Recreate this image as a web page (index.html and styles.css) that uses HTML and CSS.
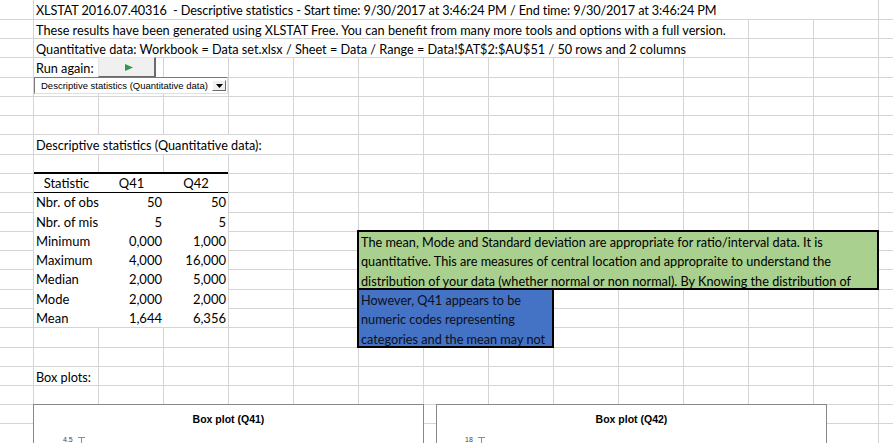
FILE: index.html
```html
<!DOCTYPE html>
<html lang="en">
<head>
  <meta charset="UTF-8">
  <title>XLSTAT - Descriptive statistics</title>
  <link rel="stylesheet" href="styles.css">
</head>
<body>

  <div class="sheet">
    <div class="lines">
      <i></i><i></i><i></i><i></i><i></i><i></i><i></i><i></i>
      <i></i><i></i><i></i><i></i><i></i><i></i><i></i><i></i>
      <i></i><i></i><i></i><i></i><i></i><i></i><i></i>
    </div>

    <div class="cell head-line">XLSTAT 2016.07.40316&nbsp; - Descriptive statistics - Start time: 9/30/2017 at 3:46:24 PM / End time: 9/30/2017 at 3:46:24 PM</div>
    <div class="cell notice-line">These results have been generated using XLSTAT Free. You can benefit from many more tools and options with a full version.</div>
    <div class="cell source-line">Quantitative data: Workbook = Data set.xlsx / Sheet = Data / Range = Data!$AT$2:$AU$51 / 50 rows and 2 columns</div>

    <div class="cell run-label">Run again:</div>
    <button class="run-button" type="button">
      <svg width="8" height="7" viewBox="0 0 8 7"><polygon points="0,0 8,3.5 0,7" fill="#2f9a45"/></svg>
    </button>

    <div class="combo">
      <span>Descriptive statistics (Quantitative data)</span>
      <span class="combo-arrow">
        <svg width="7" height="4" viewBox="0 0 7 4"><polygon points="0,0 7,0 3.5,4" fill="#000"/></svg>
      </span>
    </div>

    <div class="cell section-title">Descriptive statistics (Quantitative data):</div>

    <div class="stats">
      <div class="th">Statistic</div><div class="th">Q41</div><div class="th">Q42</div>
      <div>Nbr. of obs</div><div class="num">50</div><div class="num">50</div>
      <div>Nbr. of mis</div><div class="num">5</div><div class="num">5</div>
      <div>Minimum</div><div class="num">0,000</div><div class="num">1,000</div>
      <div>Maximum</div><div class="num">4,000</div><div class="num">16,000</div>
      <div>Median</div><div class="num">2,000</div><div class="num">5,000</div>
      <div>Mode</div><div class="num">2,000</div><div class="num">2,000</div>
      <div>Mean</div><div class="num">1,644</div><div class="num">6,356</div>
    </div>

    <div class="note note-green">
      <div>The mean, Mode and Standard deviation are appropriate for ratio/interval data. It is</div>
      <div>quantitative. This are measures of central location and appropraite to understand the</div>
      <div>distribution of your data (whether normal or non normal). By Knowing the distribution of</div>
    </div>

    <div class="note note-blue">
      <div>However, Q41 appears to be</div>
      <div>numeric codes representing</div>
      <div>categories and the mean may not</div>
    </div>

    <div class="cell plots-title">Box plots:</div>

    <div class="charts">
      <div class="chart chart-q41">
        <div class="chart-title">Box plot (Q41)</div>
        <div class="axis"><span>4.5</span><svg width="7" height="6" viewBox="0 0 7 6"><path d="M0 0.5H7M3.5 0V6" stroke="#8c8c8c" stroke-width="1"/></svg></div>
      </div>
      <div class="chart chart-q42">
        <div class="chart-title">Box plot (Q42)</div>
        <div class="axis"><span>18</span><svg width="7" height="6" viewBox="0 0 7 6"><path d="M0 0.5H7M3.5 0V6" stroke="#8c8c8c" stroke-width="1"/></svg></div>
      </div>
    </div>
  </div>

</body>
</html>
```

FILE: styles.css
```css
html, body {
  margin: 0;
  overflow: hidden;
  background: #fff;
}
body {
  font-family: Lato, "Liberation Sans", sans-serif;
  font-size: 12.7px;
  color: #000;
}

.sheet {
  --rows: 20px 19px 19px 20px 19px 19px 19px 20px 19px 19px 20px 19px 19px 19px 20px 19px 19px 20px 19px 19px 19px 19px 20px;
  display: grid;
  grid-template-columns: 34px repeat(13, 65px) 1fr;
  grid-template-rows: var(--rows);
  height: 443px;
  overflow: hidden;
}
.lines {
  grid-area: 1 / 1 / -1 / -1;
  display: grid;
  grid-template-rows: var(--rows);
}
.lines i {
  border-bottom: 1px solid #d4d4d4;
  background: repeating-linear-gradient(90deg, transparent 0 33px, #d4d4d4 33px 34px, transparent 34px 65px);
}

/* text cells: white so the overflowing text hides the gridlines */
.cell {
  background: #fff;
  margin: 0 1px 1px 0;
  padding: 2px 2px 0;
  white-space: nowrap;
  overflow: hidden;
  line-height: 17px;
}
.head-line { grid-row: 1; grid-column: 2 / 15; letter-spacing: -0.12px; }
.notice-line { grid-row: 2; grid-column: 2 / 13; }
.source-line { grid-row: 3; grid-column: 2 / 13; }
.run-label { grid-row: 4; grid-column: 2; }
.section-title { grid-row: 8; grid-column: 2 / 6; }
.plots-title { grid-row: 20; grid-column: 2; }

.run-button {
  grid-row: 4;
  grid-column: 3;
  align-self: start;
  justify-self: start;
  width: 58px;
  height: 20px;
  margin: -1px 0 0 -1px;
  padding: 0 0 0 4px;
  background: #f0f0f0;
  border: 1px solid;
  border-color: #e6e6e6 #6b6b6b #6b6b6b #e6e6e6;
  border-right-width: 2px;
  display: flex;
  align-items: center;
  justify-content: center;
}

.combo {
  grid-row: 5;
  grid-column: 2 / 5;
  align-self: start;
  height: 17px;
  margin: -1px 1px 0 0;
  box-sizing: border-box;
  border: 1px solid;
  border-color: #7a7a7a #e0e0e0 #e0e0e0 #7a7a7a;
  background: #fff;
  display: flex;
  align-items: center;
  justify-content: space-between;
  padding: 0 1px 0 6px;
  font-family: "Liberation Sans", Arial, sans-serif;
  font-size: 9.5px;
  white-space: nowrap;
}
.combo-arrow {
  width: 14px;
  height: 11px;
  box-sizing: border-box;
  border: 1px solid;
  border-color: #fff #6b6b6b #6b6b6b #fff;
  background: #f0f0f0;
  display: flex;
  align-items: center;
  justify-content: center;
}

.stats {
  grid-row: 10 / 18;
  grid-column: 2 / 5;
  margin: -2px 1px 1px 0;
  border-top: 2px solid #000;
  background: #fff;
  display: grid;
  grid-template-columns: 65px 65px 64px;
  grid-template-rows: 19px 20px 19px 19px 19px 20px 19px 18px;
  font-size: 13px;
}
.stats div {
  padding: 0 2px;
  line-height: 19px;
  white-space: nowrap;
  overflow: hidden;
}
.stats .th {
  line-height: 18px;
  text-align: center;
  border-bottom: 1px solid #000;
}
.stats .num {
  text-align: right;
}

.note {
  border: 2px solid #000;
  padding: 1px 0 0 2px;
  overflow: hidden;
  white-space: nowrap;
  line-height: 19.3px;
}
.note-green {
  grid-row: 13 / 16;
  grid-column: 7 / 15;
  margin: -2px 0 0 -2px;
  background: #a9d08e;
}
.note-blue {
  grid-row: 16 / 19;
  grid-column: 7 / 10;
  margin: -2px 0 0 -2px;
  background: #4472c4;
  color: #0c1020;
}

.charts {
  grid-row: 22 / 24;
  grid-column: 1 / -1;
  margin-top: -1px;
  padding-left: 33px;
  display: flex;
  align-items: flex-start;
  gap: 12px;
}
.chart {
  width: 391px;
  height: 300px;
  flex: none;
  box-sizing: border-box;
  border: 1px solid #888;
  background: #fff;
  font-family: "Liberation Sans", Arial, sans-serif;
}
.chart-title {
  padding-top: 8px;
  text-align: center;
  font-weight: bold;
  font-size: 10.5px;
  line-height: 13px;
}
.axis {
  display: flex;
  align-items: center;
  gap: 5px;
  margin-top: 10px;
  font-size: 7px;
  line-height: 8px;
  color: #444;
}
.chart-q41 .axis { padding-left: 29px; }
.chart-q42 .axis { padding-left: 28px; }
```
